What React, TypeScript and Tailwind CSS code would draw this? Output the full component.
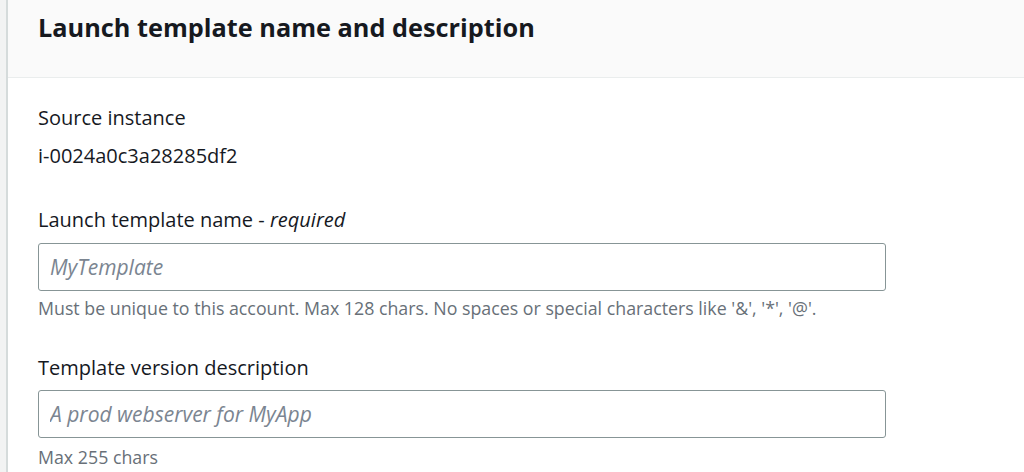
export default function App() {
  const font = { fontFamily: '"Open Sans", "Noto Sans", sans-serif' };
  return (
    <div className="flex h-[472px] w-[1024px] overflow-hidden bg-white text-[#16191f]" style={font}>
      {/* left gutter */}
      <div className="w-[6px] shrink-0 bg-[#f2f3f3]" />
      <div className="w-[2px] shrink-0 bg-[#d5dbdb]" />

      <div className="flex-1">
        {/* Header */}
        <div className="h-[78px] border-b border-[#eaeded] bg-[#fafafa] pl-[30px] pt-[11px]">
          <h2 className="text-[25.3px] font-bold leading-[32px]">Launch template name and description</h2>
        </div>

        <div className="pl-[30px] pt-[28px]">
          <p className="text-[20px] leading-[24px]">Source instance</p>
          <p className="mt-[14px] text-[20px] leading-[24px]">i-0024a0c3a28285df2</p>

          <p className="mt-[40px] text-[20px] leading-[24px]">
            Launch template name - <i>required</i>
          </p>
          <input
            placeholder="MyTemplate"
            className="mt-[11px] h-[48px] w-[848px] rounded-[3px] border border-[#879596] px-[11px] text-[21px] italic outline-none placeholder:text-[#7b8591]"
            style={font}
          />
          <p className="mt-[7px] text-[17.8px] leading-[20px] text-[#687078]">
            Must be unique to this account. Max 128 chars. No spaces or special characters like '&amp;', '*', '@'.
          </p>

          <p className="mt-[38px] text-[20px] leading-[24px]">Template version description</p>
          <input
            placeholder="A prod webserver for MyApp"
            className="mt-[10px] h-[48px] w-[848px] rounded-[3px] border border-[#879596] px-[11px] text-[21px] italic outline-none placeholder:text-[#7b8591]"
            style={font}
          />
          <p className="mt-[9px] text-[17.8px] leading-[20px] text-[#687078]">Max 255 chars</p>
        </div>
      </div>
    </div>
  );
}
